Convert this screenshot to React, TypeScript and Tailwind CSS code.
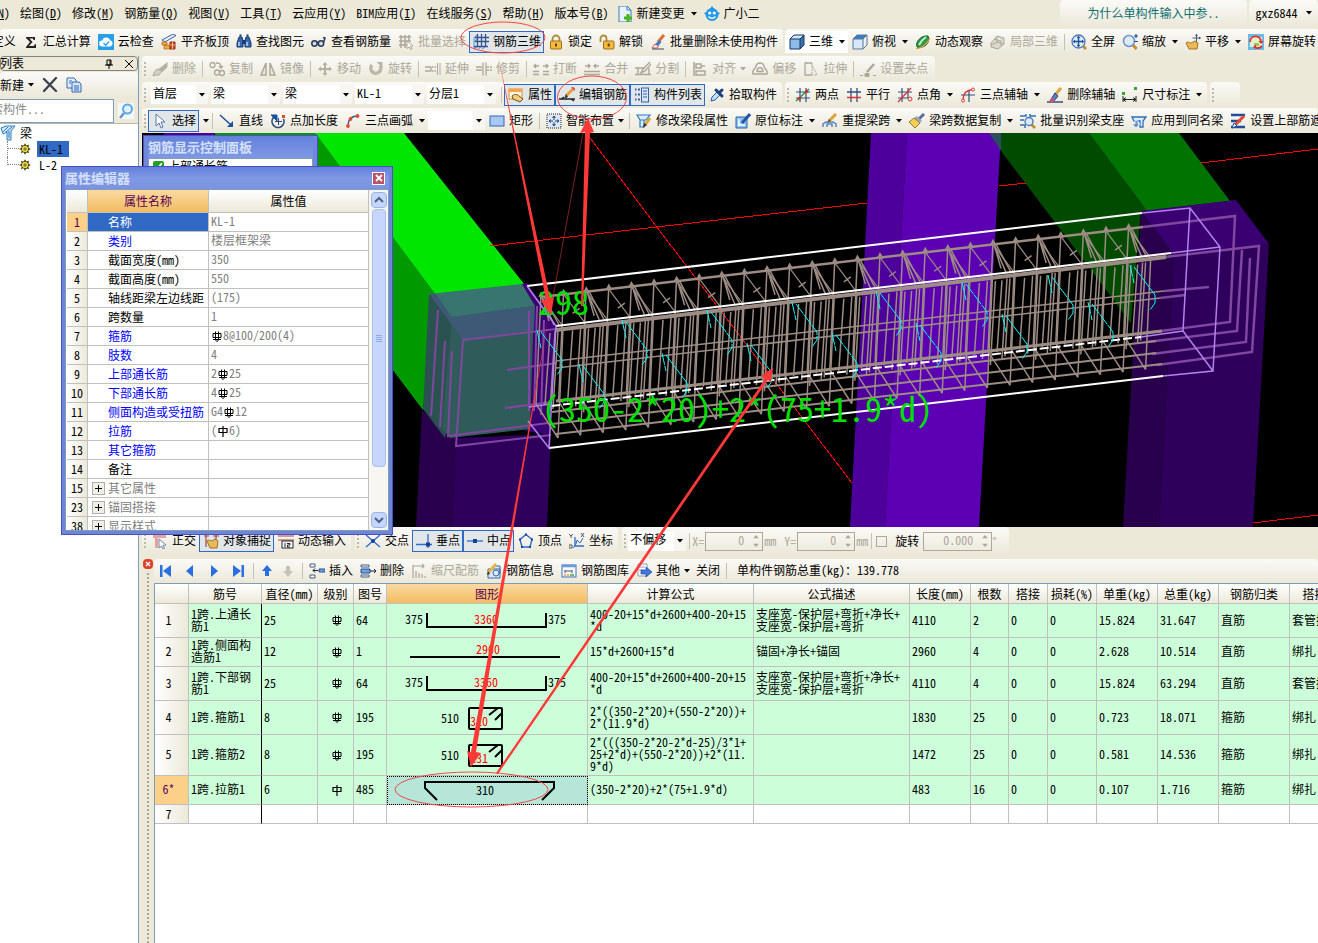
import React from "react";

const BLUE = "#1d4f9e";
const GHOST = "#aca899";

/* ---------- icons, all drawn on a 16 x 16 grid ---------- */

const magnifier = (
  <>
    <path d="M10.5 10.5 14.5 15" stroke="#c98b2e" strokeWidth="3" />
    <circle cx="7" cy="7" r="5.5" fill="#dcecfb" stroke="#6f93c4" strokeWidth="1.5" />
  </>
);

const art = {
  cloud: (
    <>
      <rect width="16" height="16" fill="#28a0e8" />
      <path d="M4 12.5a3 3 0 0 1 .3-6A4 4 0 0 1 12 6.300a3.200 3.200 0 0 1 .4 6.200z" fill="#fff" />
      <path d="m5.500 9 2.200 2.200L11 7.500" stroke="#28a0e8" strokeWidth="1.300" fill="none" />
    </>
  ),
  sigma: <path d="M3 3h9v3h-1.500l-.5-1.500H6.500L9.500 8l-3.500 4h5l.7-1.700H13V14H3v-1l4-5-4-4z" fill="#222" />,
  slab: (
    <>
      <path d="M1 6 12 0l3 1.500L4 8z" fill="#e8eef8" stroke="#3b62a8" />
      <path d="M1 8h5v3H1zM3 11h6v4H3z" fill="#f3a93c" stroke="#b5651a" strokeWidth=".7" />
      <path d="M9 8h5v7H9z" fill="#c8472b" stroke="#8e2a16" />
      <path d="M11.500 8v7M9 11h5" stroke="#f3c08c" />
    </>
  ),
  binoculars: (
    <>
      <path d="M3 3h3l1 4v6H1V9zM10 3h3l2 6v4H9V7z" fill="#3a69b4" stroke="#16386f" />
      <path d="M6.500 6h3v4h-3z" fill="#16386f" />
      <path d="M3 8v4M11 8v4" stroke="#bcd4f2" strokeWidth="1.500" />
      <path d="M3.500 1.500h2M10.500 1.500h2" stroke="#16386f" strokeWidth="2" />
    </>
  ),
  glasses: (
    <g fill="#c8dcf0" stroke="#2b3950" strokeWidth="1.500">
      <circle cx="3.500" cy="9.500" r="2.700" />
      <circle cx="10" cy="9.500" r="2.700" />
      <path d="M6 9h1.500M12.500 8.500 14 4l-2-.5" fill="none" />
    </g>
  ),
  ghostGrid: (
    <>
      <path d="M1 3h12M1 7h12M1 11h8M3 1v13M7 1v13M11 1v6" stroke={GHOST} strokeWidth="1.500" />
      <path d="m9 7 6 5-2.500.3L14 15l-1.500.6-1.200-2.600L9 14.500z" fill="#fff" stroke={GHOST} />
    </>
  ),
  grid3d: (
    <>
      <path d="M1 15V4l3-3M1 15l4-3M5 15l4-3M9 15l4-3M1 8l3-3" fill="none" stroke="#7fa0d8" strokeWidth="1.300" />
      <path d="M4.500 0v13M8.500 0v13M12.500 0v13M2 3.500h14M2 7.500h14M1 12.500h14" stroke="#33558f" strokeWidth="1.300" />
    </>
  ),
  lock: (
    <>
      <path d="M4.500 8V5a3.500 3.500 0 0 1 7 0v3" fill="none" stroke="#b18a38" strokeWidth="1.800" />
      <rect x="2.500" y="7" width="11" height="8" rx="1" fill="#f4b93f" stroke="#a36f14" />
      <path d="M8 9.500v3" stroke="#69430a" strokeWidth="2" />
    </>
  ),
  unlock: (
    <>
      <path d="M1.500 8V4.500a3 3 0 0 1 6 0V7" fill="none" stroke="#b18a38" strokeWidth="1.800" />
      <rect x="4.500" y="7" width="10.500" height="8" rx="1" fill="#f4b93f" stroke="#a36f14" />
      <path d="M9.700 9.500v3" stroke="#69430a" strokeWidth="2" />
    </>
  ),
  brush: (
    <>
      <path d="M14 1 8 8" stroke="#dd7030" strokeWidth="3" />
      <path d="m9.500 6 2 2-4 5-3.500-2z" fill="#3d7bd0" />
      <path d="M5 10 2 14h5l1.500-2z" fill="#fff" stroke="#d05050" />
      <path d="M2 15h12" stroke="#33466b" />
    </>
  ),
  cube: (
    <>
      <path d="M1 5h10v10H1z" fill="#8ebbe8" />
      <path d="m1 5 4-4h10l-4 4z" fill="#cfe4f8" />
      <path d="m11 5 4-4v10l-4 4z" fill="#3c6fae" />
      <path d="M1 5h10v10H1zM1 5l4-4h10l-4 4M15 1v10l-4 4" fill="none" stroke="#17365f" />
    </>
  ),
  cubeTop: (
    <>
      <path d="M1 5h10v10H1z" fill="#d8e8f6" />
      <path d="m1 5 4-4h10l-4 4z" fill="#3c7cc4" />
      <path d="M1 5h10v10H1zM1 5l4-4h10l-4 4M15 1v10l-4 4" fill="none" stroke="#54769f" />
    </>
  ),
  orbit: (
    <>
      <ellipse cx="8" cy="8" rx="8" ry="3" transform="rotate(-45 8 8)" fill="#f08a24" />
      <path d="M2 13C0 8 6 1 13 2c3 7-4 13-11 11z" fill="#2a9a4a" stroke="#175f2d" />
      <path d="M4 11c2-4 4-6 7-8" stroke="#bff0c8" strokeWidth="2" fill="none" />
      <path d="M1 14.500C5 15 12 11 15 4" stroke="#e8a33a" strokeWidth="1.200" fill="none" />
    </>
  ),
  localCube: (
    <path d="m1 9 6-7 7 2v6l-6 5-7-2zM7 2v6l7 2M7 8l-6 3M4 5l7 2v5" fill="#dcd9cb" stroke={GHOST} />
  ),
  fullscreen: (
    <>
      <path d="m11 11 4 4" stroke="#c98b2e" strokeWidth="3" />
      <circle cx="7.500" cy="7.500" r="6.500" fill="#e3effc" stroke="#4c74b4" strokeWidth="1.300" />
      <path d="M7.500 2.500v10M2.500 7.500h10" stroke={BLUE} strokeWidth="1.500" />
      <path d="m7.500 2-2 2h4zM7.500 13l-2-2h4zM2 7.500l2-2v4zM13 7.500l-2-2v4z" fill={BLUE} />
    </>
  ),
  zoom: (
    <>
      {magnifier}
      <path d="M12 2h4M14 0v4M12 7.500h4" stroke={BLUE} strokeWidth="1.200" />
    </>
  ),
  pan: (
    <>
      <path d="M1 9c2-2 4 0 5 0l4-2 3 2-1 6H4z" fill="#eab958" stroke="#a87520" />
      <path d="M11.500 0v8M7.500 4h8" stroke="#44597e" />
      <path d="m11.500 0-1.500 2h3zM16 4l-2-1.500v3z" fill="#44597e" />
    </>
  ),
  screenRotate: (
    <>
      <rect width="16" height="16" fill="#6cbbe6" />
      <rect x="2" y="3" width="12" height="10" fill="#e4f0c8" />
      <path d="M6 9h5v3H6z" fill="#9cc860" />
      <path d="M2 8c0-7 11-8 11 0" fill="none" stroke="#e02e2e" strokeWidth="1.800" />
      <path d="M14 12c-2 2-5 3-7 1" fill="none" stroke="#e02e2e" strokeWidth="1.800" />
      <path d="m10.500 7 5 0-2.500 3zM8 10.500v4.500l-3-2z" fill="#e02e2e" />
    </>
  ),
  ghostBrush: (
    <>
      <path d="M1 15c1-4 2-6 5-7l4 2-3 4H4z" fill="#d5d1c2" stroke={GHOST} />
      <path d="M15.500 1v5l-5 5-4-3z" fill="#b5b1a1" />
    </>
  ),
  ghostCopy: (
    <g fill="none" stroke={GHOST} strokeWidth="1.300">
      <circle cx="3.500" cy="4" r="2.500" />
      <circle cx="8" cy="11.500" r="2.500" />
      <circle cx="13" cy="12" r="2.500" />
      <path d="M7 2c4 0 5 1 5 5m-2-2 2 2 2-2" />
    </g>
  ),
  ghostMirror: <path d="M6 2v12H1zM10 2v12h5z" fill="#ece9d8" stroke={GHOST} strokeWidth="1.500" />,
  ghostMove: (
    <path d="m8 1 2.500 3H9v3h3V5.500L15 8l-3 2.500V9H9v3h1.500L8 15l-2.500-3H7V9H4v1.500L1 8l3-2.500V7h3V4H5.500z" fill="#b5b1a1" />
  ),
  ghostRotate: (
    <>
      <path d="M4 4a5 5 0 1 0 8 .5" fill="none" stroke="#bcb8a8" strokeWidth="3.500" />
      <path d="M8.500 1h6v6z" fill="#bcb8a8" />
    </>
  ),
  ghostExtend: (
    <>
      <path d="M0 6h6M0 10h6M6 5.500v5" stroke={GHOST} strokeWidth="1.300" />
      <path d="M7 6h5M7 10h5" stroke={GHOST} strokeDasharray="1.500 1" strokeWidth="1.300" />
      <path d="M12.500 2v12M15 2v12" stroke={GHOST} />
    </>
  ),
  ghostTrim: (
    <>
      <path d="M0 6h6M0 9h6" stroke={GHOST} strokeWidth="1.300" />
      <path d="M7 1.500v13M10 1.500v13" stroke={GHOST} strokeWidth="1.300" />
      <path d="M11 6h5M11 9h5" stroke={GHOST} strokeWidth="1.300" strokeDasharray="2 1" />
    </>
  ),
  ghostBreak: (
    <path d="M0 10.500h6M10 10.500h6M0 13.500h6M10 13.500h6M1 5h5M10 5h5M3 3 1 5l2 2M13 3l2 2-2 2" fill="none" stroke={GHOST} strokeWidth="1.400" />
  ),
  ghostMerge: (
    <path d="M0 10.500h16M0 13.500h16M1 5h5M10 5h5M4 3l2 2-2 2M12 3l-2 2 2 2" fill="none" stroke={GHOST} strokeWidth="1.400" />
  ),
  ghostSplit: <path d="M0 7h10M0 13.500h16M3 7v7M14 7v7M15 1 8 8l-2 4 4-2 6-7" fill="none" stroke={GHOST} strokeWidth="1.400" />,
  ghostAlign: <path d="M2 1v14M4 3h5v4H4zM4 10h9v4H4zM9 5h4" fill="none" stroke={GHOST} strokeWidth="1.500" />,
  ghostOffset: (
    <g fill="none" stroke={GHOST} strokeWidth="1.400">
      <path d="M1 13c-1.500-5 2-4 3-8s7-4 8 0 4 3 3 8z" />
      <path d="M5 10.500c0-5 6-5 6 0z" />
    </g>
  ),
  ghostStretch: (
    <>
      <path d="M9 2H2v12h7" fill="none" stroke={GHOST} strokeWidth="1.300" />
      <path d="M9 2v12M9 4l5 10H9" fill="none" stroke={GHOST} strokeDasharray="2 1" />
    </>
  ),
  ghostGrip: (
    <>
      <path d="M0 14.500h3M13 14.500h3M5 12.500h4v3H5z" fill={GHOST} stroke={GHOST} />
      <path d="M14 3 7 11" stroke={GHOST} strokeWidth="2.500" />
    </>
  ),
  property: (
    <>
      <rect x="1" y="2" width="13" height="10" fill="#fff4dc" stroke="#e0892c" />
      <path d="M1 2h13v3H1z" fill="#f6a445" />
      <path d="M4 9c2-2 5-2 7 0l4 3-3 3-7-3z" fill="#f2cd7c" stroke="#6b5320" />
    </>
  ),
  editBar: (
    <>
      <path d="M0 12h16M2 12l3-2M12 12l3 2" stroke="#222" strokeWidth="1.300" />
      <path d="m14 2-7 7" stroke="#e3a23b" strokeWidth="3" />
      <path d="m7 7-2 5 4-2z" fill="#333" />
      <path d="m13 0 3 3" stroke="#d85252" strokeWidth="2" />
    </>
  ),
  list: (
    <>
      <path d="M1 2.500h1.500M4 2.500h2M1 7.500h1.500M4 7.500h2M1 12.500h1.500M4 12.500h2" stroke="#3a5fa0" strokeWidth="2" />
      <rect x="7.500" y="1" width="7" height="14" fill="#d7e6fa" stroke="#3a5fa0" />
      <path d="M9 4h4M9 7h4M9 10h4" stroke="#3a5fa0" />
    </>
  ),
  dropper: (
    <>
      <path d="m2 14 1-4 5-5 3 3-5 5z" fill="#bfe0f8" stroke="#2d5fae" />
      <path d="m7 3 6 6M10 6l3-3" stroke="#1d3f80" strokeWidth="3" strokeLinecap="round" />
    </>
  ),
  twoPoint: (
    <>
      <path d="M1 5h14M1 11h14M5 1v14M11 1v14" stroke="#33507f" strokeWidth="1.200" />
      <path d="M1 14 14 2" stroke="#1c8a2c" strokeWidth="1.300" />
      <circle cx="4.500" cy="11.500" r="1.700" fill="#c83232" />
      <circle cx="11.500" cy="4.500" r="1.700" fill="#c83232" />
    </>
  ),
  parallel: (
    <>
      <path d="M1 5h14M5 1v14M11 1v14" stroke="#33507f" strokeWidth="1.300" />
      <path d="M1 10.500h14" stroke="#d33" strokeWidth="1.500" />
    </>
  ),
  pointAngle: (
    <>
      <path d="M1 5h14M1 11h10M5 1v14M11 1v10" stroke="#33507f" strokeWidth="1.200" />
      <path d="M1 15 14 1" stroke="#d33" strokeWidth="1.300" />
      <circle cx="13" cy="12" r="2" fill="none" stroke="#d33" />
    </>
  ),
  threeAxis: (
    <>
      <path d="M1 8h14M9 3v12" stroke="#33507f" strokeWidth="1.200" />
      <path d="M3 13C3 6 6 3 13 2.500" fill="none" stroke="#d33" strokeWidth="1.300" />
      <circle cx="3" cy="13.500" r="1.500" fill="#fff" stroke="#d33" />
      <circle cx="13" cy="2.500" r="1.500" fill="#fff" stroke="#d33" />
    </>
  ),
  eraseAxis: (
    <>
      <path d="M0 15h16" stroke="#33507f" strokeWidth="1.500" />
      <path d="m14 1-6 7" stroke="#d8a743" strokeWidth="3" />
      <path d="m8 6 3 3-4 5H3z" fill="#5b7fc0" stroke="#263f78" />
      <path d="m4 11 4 2-2 2H3z" fill="#e0506a" />
    </>
  ),
  dimension: (
    <>
      <path d="M0 5h3v3H0zM12 0h3v3h-3z" fill="#35a535" />
      <path d="M1 9v6M14 9v6M1 12.500h13M4 10.500l-3 2 3 2M11 10.500l3 2-3 2" fill="none" stroke="#222" />
    </>
  ),
  cursor: <path d="M4 1v12l3-3 2 5 2-1-2-5h4z" fill="#fff" stroke="#5677ab" />,
  line: (
    <>
      <path d="m1 2 11 10" stroke={BLUE} strokeWidth="1.500" />
      <path d="M14 14H8l6-6z" fill={BLUE} />
    </>
  ),
  pointLength: (
    <>
      <path d="M4 4a6 6 0 1 0 9.500 2" fill="none" stroke="#334d7a" strokeWidth="1.700" />
      <path d="M1 2h6v6zM8.500 5v7M5 8.500h7" stroke={BLUE} fill={BLUE} />
      <path d="M12 2h3v3h-3z" fill="#d94a3a" />
    </>
  ),
  arc: (
    <>
      <path d="M3 13C3 7 6 3 12 3" fill="none" stroke="#2e5f9f" strokeWidth="1.400" />
      <circle cx="3" cy="13" r="1.900" fill="#e04a35" />
      <circle cx="5.500" cy="6" r="1.900" fill="#e04a35" />
      <circle cx="12.500" cy="3" r="1.900" fill="#e04a35" />
    </>
  ),
  rectangle: <rect x="1" y="3" width="14" height="10" fill="#a9c8f6" stroke="#3566b8" />,
  smart: (
    <>
      <rect x="1" y="1" width="14" height="14" fill="#dce8f8" stroke="#222" strokeDasharray="1 1" />
      <path d="M8 3v4M8 9v4M3 8h4M9 8h4M6.500 5 8 3l1.500 2M6.500 11 8 13l1.500-2M5 6.500 3 8l2 1.500M11 6.500 13 8l-2 1.500" fill="none" stroke="#24416f" />
    </>
  ),
  editSpan: (
    <>
      <path d="M1 2h13l-4 5H4zM4 7h4v7H4z" fill="#d9ecfb" stroke="#2e7abf" strokeWidth="1.200" />
      <path d="m14 5-5 7" stroke="#dfa13a" strokeWidth="3" />
      <path d="m8 10-1 5 4-3z" fill="#333" />
    </>
  ),
  inPlace: (
    <>
      <path d="M1 4h11v11H1z" fill="#8ec0ee" stroke="#2a66ac" />
      <path d="M3 12h7M4 6v7" stroke="#fff" strokeWidth="1.500" />
      <path d="m15 1-8 9" stroke="#2855a0" strokeWidth="3" />
    </>
  ),
  reSpan: (
    <>
      <path d="M1 14v-3l3-2h7l3 2v3M5 14v-3h5v3" fill="none" stroke="#5b84bd" strokeWidth="1.500" />
      <path d="m14 1-7 7" stroke="#e5a23c" strokeWidth="3" />
      <path d="m7 6-2 4 4-2z" fill="#555" />
    </>
  ),
  spanCopy: (
    <>
      <path d="m15 1-5 5" stroke="#5a6d94" strokeWidth="3" />
      <path d="m8 3 5 5-2 2-6-5z" fill="#9aa7c4" />
      <path d="m5 5 6 5-5 5-6-6z" fill="#f3cf5a" stroke="#9b7a22" />
    </>
  ),
  identify: (
    <>
      <path d="M0 3h6V1M0 7h4M10 1v2h6M0 12h5v3" fill="none" stroke="#2e6fba" strokeWidth="1.500" />
      <path d="m11 11 4 4" stroke="#c98b2e" strokeWidth="2.500" />
      <circle cx="9" cy="8.500" r="4" fill="#d8eafb" stroke="#4773b2" strokeWidth="1.300" />
    </>
  ),
  sameName: (
    <>
      <path d="M1 4h14l-3 4v6H9V8H3z" fill="#dceffc" stroke="#2e6fba" strokeWidth="1.300" />
      <path d="M4 7v4H1l4 4 4-4H7V8z" fill="#6e8fc8" stroke="#fff" strokeWidth=".7" />
    </>
  ),
  topBar: (
    <>
      <path d="M1 2h14M1 8h10M1 14h14" stroke="#1d4f9e" strokeWidth="2.500" />
      <path d="M14 3 4 13" stroke="#e04a30" strokeWidth="3" />
      <path d="m4 10-2 5 5-2z" fill="#fff" stroke="#1d4f9e" />
    </>
  ),
  ortho: (
    <>
      <path d="M1 2h13v3H6v10H3V5H1z" fill="#e5a3a0" />
      <path d="m7 6 7 6-3 .3 1.500 3-1.500.7-1.500-3L7 15z" fill="#fff" stroke="#6b86ac" />
    </>
  ),
  snap: (
    <>
      <path d="M1 3h5M3 1v13M13 1v6M10 3h6" stroke="#a9443c" strokeWidth="1.200" />
      <path d="M4 8c2-2 4 0 5 0l3-2 3 2-1 7H7z" fill="#eab958" stroke="#9a7226" />
    </>
  ),
  dynInput: (
    <>
      <path d="M0 3h16M0 7h16" stroke="#a9443c" />
      <rect x="4" y="8" width="11" height="7" fill="#fff" stroke="#222" />
      <path d="M7 10v4M9 10.500h3v1.500H9.500V14H12" fill="none" stroke="#222" />
    </>
  ),
  cross: (
    <>
      <path d="m1 2 14 12M15 2 1 14" stroke="#2e6bd0" strokeWidth="1.300" />
      <circle cx="8" cy="8" r="2" fill="#163f92" />
    </>
  ),
  perpendicular: (
    <>
      <path d="M12 1v14M0 11.500h16" stroke="#2e6bd0" strokeWidth="1.300" />
      <path d="M10 9.500h4v4h-4z" fill="#163f92" />
    </>
  ),
  middle: (
    <>
      <path d="M0 8h16" stroke="#2e6bd0" strokeWidth="1.300" />
      <path d="M6 6h4v4H6z" fill="#163f92" />
    </>
  ),
  vertex: (
    <>
      <path d="m8 1.500 6 5L12 14H4L2 6.500z" fill="none" stroke="#2e6bd0" strokeWidth="1.400" />
      <path d="M7 .5h2v2H7zM13 5.500h2v2h-2zM1 5.500h2v2H1zM3 13h2v2H3zM11 13h2v2h-2z" fill="#163f92" />
    </>
  ),
  coords: (
    <>
      <path d="M6 4v9h9" fill="none" stroke="#2e6bd0" strokeWidth="1.300" />
      <path d="m4 15 3-4 1-4 3 3 3-5" fill="none" stroke="#2e6bd0" />
      <path d="m0 1 2 2 2-2M2 3v2M12 0l3 4M15 0l-3 4M0 12h3v3H0z" fill="none" stroke="#555" />
    </>
  ),
  insert: (
    <>
      <path d="M1 1h5v3H1zM1 12h5v3H1z" fill="#fff" stroke="#44597e" />
      <path d="M10 6h6v3h-6z" fill="#6da3ea" stroke="#23508f" />
      <path d="M4 7.500h5M6 5.500l-2 2 2 2" fill="none" stroke="#222" />
    </>
  ),
  remove: (
    <>
      <path d="M1 2h8v2H1zM1 12h8v2H1z" fill="#fff" stroke="#44597e" />
      <path d="M1 6h9v4H1z" fill="#6da3ea" stroke="#23508f" />
      <path d="M10 8h6M14 6l2 2-2 2" fill="none" stroke="#222" />
    </>
  ),
  ghostScale: (
    <path d="M2 2v13M2 3h11M11 1l2 2-2 2M5 8v7M8 10v5M11 11v4M14 13v2" fill="none" stroke={GHOST} strokeWidth="1.200" />
  ),
  info: (
    <>
      <path d="M2 6h12v9H2zM8 3h6v8" fill="#dbe9fb" stroke="#3566a8" />
      <circle cx="10" cy="10" r="3" fill="none" stroke="#3566a8" />
      <path d="m10 1-8 9" stroke="#e8b54a" strokeWidth="3" />
      <path d="m2 8-1 4 3-1z" fill="#333" />
    </>
  ),
  library: (
    <>
      <rect x="1" y="2" width="14" height="12" fill="#f4f8fe" stroke="#3e70b8" />
      <path d="M1 3h14" stroke="#6b9ae0" strokeWidth="2.500" />
      <path d="M4 7v3M4 8h7M11 7v3" fill="none" stroke="#555" />
      <path d="M3 12h2M6 12h2" stroke="#e8963a" strokeWidth="1.500" />
      <path d="M9 12h4" stroke="#46a04a" strokeWidth="1.500" />
    </>
  ),
  other: (
    <>
      <path d="M2 1h9v12H2z" fill="#fff" stroke="#8a9cbc" />
      <path d="M3 4h6M3 7h4" stroke="#8a9cbc" />
      <path d="M5 7h5V4l6 5-6 5v-3H5z" fill="#3f78dc" stroke="#1d479a" strokeWidth=".7" />
    </>
  ),
  newDoc: (
    <>
      <path d="M2 0h8l4 4v12H2z" fill="#eaf4fd" stroke="#3c7bb8" />
      <path d="M10 0v4h4" fill="none" stroke="#3c7bb8" />
      <path d="M11 8v8M7 12h8" stroke="#46b31c" strokeWidth="3" />
    </>
  ),
  smiley: (
    <>
      <path d="M8 0 6 3h4zM0 7l3-1v4zM16 7l-3-1v4z" fill="#1d8be0" />
      <circle cx="8" cy="8.500" r="6.500" fill="#2698ea" />
      <circle cx="5.700" cy="7" r="1.600" fill="#fff" />
      <circle cx="10.300" cy="7" r="1.600" fill="#fff" />
      <path d="M4.500 10.500q3.500 3.500 7 0" fill="none" stroke="#fff" strokeWidth="1.300" />
    </>
  ),
  gear: (
    <>
      <circle cx="8" cy="8" r="4.500" fill="#f4e24a" stroke="#4c4708" strokeWidth="1.500" />
      <path d="M8 1v14M1 8h14M3 3l10 10M13 3 3 13" stroke="#4c4708" strokeWidth="2" strokeDasharray="3.500 7 3.500" />
      <circle cx="8" cy="8" r="4" fill="#f4e24a" />
      <circle cx="8" cy="8" r="1.500" fill="#fff" stroke="#4c4708" strokeWidth="1.300" />
    </>
  ),
  beam: (
    <>
      <path d="M1 3 6 1h9l-4 5v9H7V7L3 9z" fill="#cfe6f8" stroke="#2b7dc0" />
      <path d="M3 7 8 2M6 7l6-5M9 13V6" stroke="#2b7dc0" />
    </>
  ),
  copy: (
    <>
      <path d="M1 1h7l2 2v8H1z" fill="#e6f0fc" stroke="#3469b4" />
      <path d="M6 5h7l2 2v8H6z" fill="#d3e4fa" stroke="#3469b4" />
      <path d="M8 9h5M8 11h5M8 13h5M3 4h3M3 6h2" stroke="#3469b4" />
    </>
  ),
  close: <path d="M2 2 14 14M14 1 2 14" stroke="#39424e" strokeWidth="2.300" strokeLinecap="round" />,
  search: (
    <>
      <path d="m6 10-4 5" stroke="#6f93c4" strokeWidth="2.500" />
      <circle cx="9.500" cy="6" r="4.500" fill="#dff1fe" stroke="#5aaae4" strokeWidth="2" />
    </>
  ),
};

type IconName = keyof typeof art;

function Icon({ name }: { name: IconName }) {
  return (
    <svg viewBox="0 0 16 16" className="size-4 shrink-0" fill="none" aria-hidden="true">
      {art[name]}
    </svg>
  );
}

function Arrow({ ghost }: { ghost?: boolean }) {
  return (
    <svg viewBox="0 0 6 4" className="h-1 w-1.5 shrink-0" aria-hidden="true">
      <path d="M0 0h6L3 3.500z" fill={ghost ? GHOST : "#000"} />
    </svg>
  );
}

/* ---------- toolbar parts ---------- */

type ToolProps = {
  icon?: IconName;
  label: string;
  pressed?: boolean;
  disabled?: boolean;
  menu?: "wide" | "tight";
};

function Tool({ icon, label, pressed, disabled, menu }: ToolProps) {
  return (
    <button
      type="button"
      disabled={disabled}
      aria-pressed={pressed}
      className={`flex h-[22px] shrink-0 items-center gap-1 border pr-0.5 pl-[3px] ${
        pressed ? "border-[#316ac5] bg-[#e1e6e8]" : "border-transparent"
      } ${disabled ? "text-[#aca899]" : "text-black"}`}
    >
      {icon && <Icon name={icon} />}
      <span className="pb-0.5">{label}</span>
      {menu && (
        <span className={menu === "wide" ? "flex w-2 justify-end" : "flex w-[5px]"}>
          <Arrow ghost={disabled} />
        </span>
      )}
    </button>
  );
}

function Sep() {
  return (
    <span className="flex w-1.5 shrink-0 justify-center">
      <span className="h-4 w-px bg-[#c5c2b2]" />
    </span>
  );
}

function Grip() {
  return (
    <span className="flex w-1.5 shrink-0 flex-col items-center gap-0.5">
      {[0, 1, 2, 3].map((i) => (
        <span key={i} className="size-0.5 bg-[#bdbaab]" />
      ))}
    </span>
  );
}

function Bar({ children, className = "" }: { children?: React.ReactNode; className?: string }) {
  return (
    <div
      className={`flex shrink-0 items-center rounded-sm bg-gradient-to-b from-[#fbfaf7] to-[#ebe8d9] ${className}`}
    >
      {children}
    </div>
  );
}

function Combo({ label, value, className }: { label: string; value: string; className: string }) {
  return (
    <span className={`relative flex h-[19px] shrink-0 items-center bg-white ${className}`}>
      <select aria-label={label} className="h-full w-full appearance-none bg-transparent pb-1 pl-0.5 outline-none">
        <option>{value}</option>
      </select>
      <span className="pointer-events-none absolute inset-y-0 right-0 flex w-3 items-center justify-center bg-[#f7f6f0]">
        <Arrow />
      </span>
    </span>
  );
}

function Spin({ label, value, className }: { label: string; value: string; className: string }) {
  return (
    <span className={`flex h-[19px] shrink-0 items-center border border-[#aca899] ${className}`}>
      <input
        aria-label={label}
        defaultValue={value}
        disabled
        className="h-full w-full min-w-0 bg-transparent pr-1.5 pb-1 text-right text-[#aca899]"
      />
      <svg viewBox="0 0 12 17" className="h-4 w-3 shrink-0" aria-hidden="true">
        <path d="M3 5.500h6L6 2zM3 11.500h6L6 15z" fill={GHOST} />
      </svg>
    </span>
  );
}

/* ---------- top ---------- */

const menus = ["构件(N)", "绘图(D)", "修改(M)", "钢筋量(Q)", "视图(V)", "工具(T)", "云应用(Y)", "BIM应用(I)", "在线服务(S)", "帮助(H)", "版本号(B)"];

function MenuText({ text }: { text: string }) {
  const at = text.indexOf("(") + 1;
  return (
    <>
      {text.slice(0, at)}
      <u className="underline-offset-1">{text[at]}</u>
      {text.slice(at + 1)}
    </>
  );
}

function MenuBar() {
  return (
    <nav className="flex h-[27px] items-center">
      <div className="-ml-8 flex items-center gap-2.5 pb-0.5">
        {menus.map((m) => (
          <button type="button" key={m}>
            <MenuText text={m} />
          </button>
        ))}
      </div>
      <div className="ml-1 flex items-center">
        <Tool icon="newDoc" label="新建变更" menu="wide" />
        <Tool icon="smiley" label="广小二" />
      </div>
      <div className="ml-auto flex gap-0.5">
        <Bar className="h-[27px] w-[187px] justify-center pb-0.5">
          <a href="#help" className="text-[#0e6f70]">为什么单构件输入中参..</a>
        </Bar>
        <Bar className="h-[27px] w-[69px] justify-center pb-0.5">
          <button type="button" className="flex items-center gap-2">
            gxz6844 <Arrow />
          </button>
        </Bar>
      </div>
    </nav>
  );
}

function MainBar() {
  return (
    <div className="flex h-[29px] items-center gap-0.5">
      <Bar className="h-[26px] w-[783px] justify-end pr-0.5">
        <Tool label="定义" />
        <Tool icon="sigma" label="汇总计算" />
        <Tool icon="cloud" label="云检查" />
        <Tool icon="slab" label="平齐板顶" />
        <Tool icon="binoculars" label="查找图元" />
        <Tool icon="glasses" label="查看钢筋量" />
        <Tool icon="ghostGrid" label="批量选择" disabled />
        <Tool icon="grid3d" label="钢筋三维" pressed />
        <Tool icon="lock" label="锁定" />
        <Tool icon="unlock" label="解锁" />
        <Tool icon="brush" label="批量删除未使用构件" />
      </Bar>
      <Bar className="h-[26px] flex-1">
        <span className="flex bg-white">
          <Tool icon="cube" label="三维" menu="wide" />
        </span>
        <Tool icon="cubeTop" label="俯视" menu="wide" />
        <Tool icon="orbit" label="动态观察" />
        <Tool icon="localCube" label="局部三维" disabled />
        <Sep />
        <Tool icon="fullscreen" label="全屏" />
        <Tool icon="zoom" label="缩放" menu="wide" />
        <Tool icon="pan" label="平移" menu="wide" />
        <Tool icon="screenRotate" label="屏幕旋转" />
      </Bar>
    </div>
  );
}

function EditBars() {
  return (
    <div className="flex flex-col gap-px">
      <div className="flex">
        <Bar className="h-[25px] pr-1">
          <Grip />
          <Tool icon="ghostBrush" label="删除" disabled />
          <Sep />
          <Tool icon="ghostCopy" label="复制" disabled />
          <Tool icon="ghostMirror" label="镜像" disabled />
          <Sep />
          <Tool icon="ghostMove" label="移动" disabled />
          <Tool icon="ghostRotate" label="旋转" disabled />
          <Sep />
          <Tool icon="ghostExtend" label="延伸" disabled />
          <Tool icon="ghostTrim" label="修剪" disabled />
          <Sep />
          <Tool icon="ghostBreak" label="打断" disabled />
          <Tool icon="ghostMerge" label="合并" disabled />
          <Tool icon="ghostSplit" label="分割" disabled />
          <Sep />
          <Tool icon="ghostAlign" label="对齐" disabled menu="tight" />
          <Tool icon="ghostOffset" label="偏移" disabled />
          <Tool icon="ghostStretch" label="拉伸" disabled />
          <Sep />
          <Tool icon="ghostGrip" label="设置夹点" disabled />
        </Bar>
      </div>
      <div className="flex gap-[3px]">
        <Bar className="h-[25px] pr-0.5">
          <Grip />
          <span className="flex items-center gap-[3px] pr-0.5 pl-[3px]">
            <Combo label="楼层" value="首层" className="w-[57px]" />
            <Combo label="构件类别" value="梁" className="w-[69px]" />
            <Combo label="构件类型" value="梁" className="w-[69px]" />
            <Combo label="构件" value="KL-1" className="w-[69px]" />
            <Combo label="分层" value="分层1" className="w-[69px]" />
          </span>
          <Sep />
          <Tool icon="property" label="属性" pressed />
          <Tool icon="editBar" label="编辑钢筋" pressed />
          <Tool icon="list" label="构件列表" pressed />
          <Tool icon="dropper" label="拾取构件" />
        </Bar>
        <Bar className="h-[25px] pr-0.5">
          <Grip />
          <Tool icon="twoPoint" label="两点" />
          <Tool icon="parallel" label="平行" />
          <Tool icon="pointAngle" label="点角" menu="wide" />
          <Tool icon="threeAxis" label="三点辅轴" menu="wide" />
          <Tool icon="eraseAxis" label="删除辅轴" />
          <Tool icon="dimension" label="尺寸标注" menu="wide" />
        </Bar>
        <Bar className="h-[25px] w-[30px]">
          <Grip />
        </Bar>
      </div>
      <Bar className="h-[25px] overflow-hidden">
        <Grip />
        <Tool icon="cursor" label="选择" pressed />
        <span className="flex w-5 pl-1">
          <Arrow />
        </span>
        <Sep />
        <Tool icon="line" label="直线" />
        <Tool icon="pointLength" label="点加长度" />
        <Tool icon="arc" label="三点画弧" menu="wide" />
        <Combo label="绘制方式" value="" className="w-[57px]" />
        <Tool icon="rectangle" label="矩形" />
        <Sep />
        <Tool icon="smart" label="智能布置" menu="tight" />
        <Sep />
        <Tool icon="editSpan" label="修改梁段属性" />
        <Tool icon="inPlace" label="原位标注" menu="wide" />
        <Tool icon="reSpan" label="重提梁跨" menu="wide" />
        <Tool icon="spanCopy" label="梁跨数据复制" menu="wide" />
        <Tool icon="identify" label="批量识别梁支座" />
        <Tool icon="sameName" label="应用到同名梁" />
        <Tool icon="topBar" label="设置上部筋遮挡" />
      </Bar>
    </div>
  );
}

/* ---------- component list on the left ---------- */

function ComponentList() {
  return (
    <aside className="flex w-[139px] shrink-0 flex-col border-r border-[#7f9db9]">
      <header className="flex h-[15px] items-center gap-3 rounded-sm border border-[#85837a] pr-1">
        <span className="-ml-px flex-1 pb-0.5">列表</span>
        <svg viewBox="0 0 8 10" className="h-2.5 w-2" aria-hidden="true">
          <path d="M2 1h4v5H2zM0 6h8M4 6v4M5 1v5" fill="none" stroke="#000" />
        </svg>
        <button type="button" aria-label="关闭列表">
          <svg viewBox="0 0 8 8" className="size-2">
            <path d="m0 0 8 8M8 0 0 8" stroke="#000" />
          </svg>
        </button>
      </header>
      <Bar className="mt-px h-[26px] gap-2">
        <button type="button" className="flex items-center gap-1">
          新建 <Arrow />
        </button>
        <button type="button" aria-label="删除构件">
          <Icon name="close" />
        </button>
        <button type="button" aria-label="复制构件">
          <Icon name="copy" />
        </button>
      </Bar>
      <div className="flex h-[26px] items-center justify-between overflow-hidden border-b border-[#b9b6a6] bg-[#ece9d8]">
        <input
          aria-label="搜索构件"
          placeholder="搜索构件..."
          className="-ml-6 h-6 w-[138px] border border-[#7f9db9] bg-white px-0.5 pb-1 placeholder:text-[#8a8a8a]"
        />
        <button type="button" aria-label="搜索" className="mx-auto bg-[#f4f8fc]">
          <Icon name="search" />
        </button>
      </div>
      <ul className="flex-1 bg-white pt-px">
        <li>
          <div className="flex h-4 items-center gap-1">
            <Icon name="beam" />
            梁
          </div>
          <ul className="ml-[7px]">
            {["KL-1", "L-2"].map((name, i) => (
              <li key={name} className="flex h-4 items-center">
                <span className={`w-3 border-l border-dotted border-[#808080] ${i === 0 ? "h-4" : "-mt-2 h-2"}`}>
                  <span className={`block border-b border-dotted border-[#808080] ${i === 0 ? "h-2" : "h-full"}`} />
                </span>
                <svg viewBox="0 0 16 16" className="size-3 shrink-0" aria-hidden="true">
                  {art.gear}
                </svg>
                <span
                  className={`ml-1.5 flex h-4 items-center pr-1.5 pl-0.5 ${i === 0 ? "bg-[#316ac5]" : ""}`}
                >
                  {name}
                </span>
              </li>
            ))}
          </ul>
        </li>
      </ul>
    </aside>
  );
}

/* ---------- 3D scene ---------- */

const STEEL = "#9c8c84";
const stirrups = Array.from({ length: 27 }, (_, i) => {
  const x = 541 + i * 22.6;
  return { x, y: 297 - (x - 541) * 0.1165, dense: i % 2 === 0 };
});
const ties = [
  [539, 330], [581, 364], [624, 320], [664, 353], [709, 310], [749, 343], [794, 302], [834, 333],
  [878, 291], [918, 323], [964, 282], [1004, 314], [1050, 275], [1090, 302], [1132, 265],
];

function Scene() {
  return (
    <svg
      viewBox="142 133 1176 394"
      preserveAspectRatio="xMinYMin slice"
      className="block h-full w-full"
      fill="none"
      role="img"
      aria-label="钢筋三维"
    >
      <path d="M164 133h50v8h-50z" fill="#4b0096" />
      <path d="M214 133h101l120 161-12 116z" fill="#009a00" />
      <path d="M315 133h89l121 152-90 9z" fill="#00e600" />
      <path d="m871 133h36l-22 394h-35z" fill="#4d009b" />
      <path d="m907 133h94l-22 394h-94z" fill="#5b00b3" />
      <path d="M1001 133h88l58 78h-6l-10 112-130-172z" fill="#004b00" />
      <path d="M989 133h12v18z" fill="#2d4c5c" />
      <path d="M1089 133h90l51 68-83 10z" fill="#007300" />
      <g stroke="#f00" shapeRendering="crispEdges">
        <path d="m490 246 377-43M999 186l27-3M1201 163l117-14M588 135l68 91 196 257M1253 523l65-8" />
      </g>

      <path d="m422 410 34 28-4 89h-36z" fill="#29004c" />
      <path d="m456 438 95-4-4 93h-95z" fill="#2e005b" />
      <path d="m522 284 5-1 30 42-7 110-25-4z" fill="#3a0071" />
      <path d="m429 294 23 22 11 24-18 98-22-29z" fill="#2a5250" />
      <path d="m452 316 82-10-4 123-80 9-8-10z" fill="#2f5b5a" />
      <path d="m429 294 93-10 13 22-83 11z" fill="#387570" />
      <path d="m429 294 7 0 16 23 83-11-1 24-71 10z" fill="#3d5976" />
      <g stroke="#80479f" strokeWidth="2">
        <path d="m556 329-93 11-7 106 95-11M452 351l-4 85 100-13M438 310l-7 106M445 341l-5 86M507 370l50-7M505 408l47-6M529 311v100M537 306l-3 105M544 320l-3 95" />
      </g>

      <path d="m1141 211 33 43-15 273h-36z" fill="#29004c" />
      <path d="m1174 254 95-10-16 283h-94z" fill="#2e005b" />
      <path d="m1141 211 95-11 33 44-95 10z" fill="#3a0071" />
      <g stroke="#80479f" strokeWidth="2.500">
        <path d="m1143 227 92-11-5 106-92 12M1165 257l94-11-7 106-95 13M1242 250l-5 81-90 11M1250 258l-4 84-94 12M1164 291l45-4M1160 298l25-3" />
      </g>

      <g stroke={STEEL}>
        <path d="m541 297 602-70" strokeWidth="2.500" />
        <path d="M556 361 1164 291M556 368l604-70" strokeWidth="1.500" />
        <path d="m556 401 606-70" strokeWidth="3" />
        <path d="m552 412 604-71M552 424l604-71M556 434l606-70" strokeWidth="2" />
        {stirrups.map(({ x, y, dense }) => (
          <g key={x} strokeWidth="1.500">
            <path d={`M${x} ${y - 3}l-5 110l22 34M${x + 22} ${y + 32}l-5 109M${x - 2} ${y}l2-4 3 5`} />
            <path d={`M${x} ${y}l21 28`} strokeWidth="1.200" />
            <path d={`M${x + 17} ${y + 34}l-5 78M${x + 9} ${y + 36}l-5 72`} />
            {dense ? (
              <path d={`M${x + 1} ${y}l12 28M${x + 3} ${y}l15 28M${x + 1} ${y}l7 24M${x + 14} ${y + 34}l-5 80`} />
            ) : (
              <path d={`M${x + 16} ${y + 14}l-7 5M${x + 25} ${y + 34}l-5 84`} />
            )}
          </g>
        ))}
        <path d="m556 330 610-73" strokeWidth="4" />
      </g>
      <g stroke="#fff" strokeWidth="2">
        <path d="m527 286 615-73M556 326l615-73M549 448l614-72" />
        <path d="m551 406 590-69" strokeDasharray="9 3" />
      </g>
      <g stroke="#b183ef" strokeWidth="1.500">
        <path d="m527 286 29 40-7 122-21-27M1142 213l48-5 30 39-7 124-50 5M1171 253l49-6M1190 208l-7 123 30 40M1141 337l42-6M529 407l22-3" />
      </g>
      <g stroke="#0ff">
        {ties.map(([x, y]) => (
          <path key={x} d={`M${x - 2} ${y}l4 18M${x + 2} ${y + 2}l21 28v8l-5 7`} strokeDasharray="12 1" />
        ))}
      </g>
      <g fill="#00e000" fontSize="34" className="font-[Noto_Sans_Mono_CJK_SC,Noto_Sans_CJK_SC,sans-serif]">
        <text x="538" y="315">298</text>
        <text x="542" y="422">(350-2*20)+2*(75+1.9*d)</text>
      </g>
    </svg>
  );
}

/* ---------- floating panels ---------- */

function Rebar({ grade = 3 }: { grade?: 1 | 3 }) {
  return (
    <svg viewBox="0 0 12 12" className="inline-block size-3 align-[-2px]" role="img" aria-label="钢筋等级">
      <g fill="none" stroke="#000">
        {grade === 1 ? (
          <path d="M6 1v11M2 3.500h8v4H2z" strokeWidth="1.200" />
        ) : (
          <path d="M4.500 1.500v9M7.500 1.500v9M2 3.500h8v4H2zM2 9.500h8M6 9v3" />
        )}
      </g>
    </svg>
  );
}

type Prop = { no: number; name: string; value?: React.ReactNode; tone?: string; group?: boolean };

const properties: Prop[] = [
  { no: 1, name: "名称", value: "KL-1", tone: "bg-[#316ac5] text-white" },
  { no: 2, name: "类别", value: "楼层框架梁", tone: "text-[#0000ff]" },
  { no: 3, name: "截面宽度(mm)", value: "350" },
  { no: 4, name: "截面高度(mm)", value: "550" },
  { no: 5, name: "轴线距梁左边线距", value: "(175)" },
  { no: 6, name: "跨数量", value: "1" },
  { no: 7, name: "箍筋", value: <><Rebar />8@100/200(4)</>, tone: "text-[#0000ff]" },
  { no: 8, name: "肢数", value: "4", tone: "text-[#0000ff]" },
  { no: 9, name: "上部通长筋", value: <>2<Rebar />25</>, tone: "text-[#0000ff]" },
  { no: 10, name: "下部通长筋", value: <>4<Rebar />25</>, tone: "text-[#0000ff]" },
  { no: 11, name: "侧面构造或受扭筋", value: <>G4<Rebar />12</>, tone: "text-[#0000ff]" },
  { no: 12, name: "拉筋", value: <>(<Rebar grade={1} />6)</>, tone: "text-[#0000ff]" },
  { no: 13, name: "其它箍筋", tone: "text-[#0000ff]" },
  { no: 14, name: "备注" },
  { no: 15, name: "其它属性", tone: "text-[#808080]", group: true },
  { no: 23, name: "锚固搭接", tone: "text-[#808080]", group: true },
  { no: 38, name: "显示样式", tone: "text-[#808080]", group: true },
];

function ScrollButton({ down }: { down?: boolean }) {
  return (
    <button
      type="button"
      aria-label={down ? "向下滚动" : "向上滚动"}
      className="flex size-4 items-center justify-center rounded-sm border border-[#98b4ea] bg-[#c6d6fc]"
    >
      <svg viewBox="0 0 10 8" className="h-2 w-2.5">
        <path d={down ? "m1 2 4 4 4-4" : "m1 6 4-4 4 4"} fill="none" stroke="#4d6185" strokeWidth="2" />
      </svg>
    </button>
  );
}

function PropertyEditor() {
  return (
    <section className="absolute top-[166px] left-[61px] flex h-[369px] w-[332px] flex-col border border-[#4a50c0] bg-[#6f86d8] px-[3px] pb-[3px]">
      <header className="flex h-[22px] items-center justify-between bg-gradient-to-b from-[#6380dc] via-[#8099e4] to-[#7a92e0] pr-1">
        <h2 className="text-[13px] font-bold text-[#d5e0fa]">属性编辑器</h2>
        <button
          type="button"
          aria-label="关闭"
          className="flex size-[13px] items-center justify-center border border-white bg-[#b9536a]"
        >
          <svg viewBox="0 0 8 8" className="size-2">
            <path d="m1 1 6 6M7 1 1 7" stroke="#fff" strokeWidth="1.800" />
          </svg>
        </button>
      </header>
      <div className="flex min-h-0 flex-1 overflow-hidden border border-[#7f9db9] bg-white">
        <table className="w-[303px] shrink-0 table-fixed border-separate border-spacing-0 self-start pl-px">
          <colgroup>
            <col className="w-[21px]" />
            <col className="w-[121px]" />
            <col />
          </colgroup>
          <thead>
            <tr className="h-[23px] [&>th]:border-r [&>th]:border-b [&>th]:border-[#c0c0c0] [&>th]:font-normal">
              <th className="bg-gradient-to-b from-white to-[#ece9d8]" />
              <th className="bg-gradient-to-b from-[#fad9a0] to-[#f2bd60] text-[#5a0052]">属性名称</th>
              <th className="bg-gradient-to-b from-white to-[#ece9d8]">属性值</th>
            </tr>
          </thead>
          <tbody>
            {properties.map((p) => (
              <tr key={p.no} className="h-[19px] [&>*]:border-r [&>*]:border-b [&>*]:border-[#c0c0c0]">
                <th
                  scope="row"
                  className={`p-0 text-center font-normal ${
                    p.no === 1 ? "bg-[#fdd08a] text-[#5a0052]" : "bg-gradient-to-r from-white to-[#ece9d8]"
                  }`}
                >
                  {p.no}
                </th>
                <td className={`p-0 ${p.tone ?? ""}`}>
                  <div className="flex items-center">
                    <span className="flex w-5 justify-center">
                      {p.group && (
                        <button
                          type="button"
                          aria-label={`展开${p.name}`}
                          className="flex size-[13px] items-center justify-center border border-[#b0b0a8] bg-[#f0efe8]"
                        >
                          <svg viewBox="0 0 7 7" className="size-[7px]">
                            <path d="M0 3.500h7M3.500 0v7" stroke="#000" />
                          </svg>
                        </button>
                      )}
                    </span>
                    {p.name}
                  </div>
                </td>
                <td className="p-0 pb-0.5 pl-0.5 text-[#808080]">{p.value}</td>
              </tr>
            ))}
          </tbody>
        </table>
        <div className="flex flex-1 flex-col items-center bg-[#f7f6f1] py-0.5">
          <ScrollButton />
          <div className="mt-px flex h-[258px] w-3.5 items-center justify-center rounded-sm border border-[#a8bff0] bg-[#c6d6fc]">
            <span className="flex w-1.5 flex-col gap-px">
              {[0, 1, 2, 3].map((i) => (
                <span key={i} className="h-px bg-[#8fa9e6]" />
              ))}
            </span>
          </div>
          <span className="flex-1" />
          <ScrollButton down />
        </div>
      </div>
    </section>
  );
}

function DisplayPanel() {
  return (
    <section className="absolute top-[135px] left-[143px] h-12 w-[175px] border border-[#4a50c0] bg-[#7088dc] px-1">
      <h2 className="flex h-[22px] items-center bg-gradient-to-b from-[#6380dc] to-[#8099e4] text-[13px] font-bold text-[#d5e0fa]">
        钢筋显示控制面板
      </h2>
      <label className="flex h-6 items-center gap-1 border border-[#7f9db9] bg-white px-1 pb-2">
        <input type="checkbox" defaultChecked className="size-[11px] accent-[#21a121]" />
        上部通长筋
      </label>
    </section>
  );
}

/* ---------- snap bar ---------- */

function SnapBar() {
  return (
    <div className="flex h-8 items-center gap-1 pb-1">
      <Bar className="h-7 pr-0.5">
        <Grip />
        <Tool icon="ortho" label="正交" />
        <Tool icon="snap" label="对象捕捉" pressed />
        <Tool icon="dynInput" label="动态输入" />
      </Bar>
      <Bar className="h-7 pr-0.5">
        <Grip />
        <Tool icon="cross" label="交点" />
        <Tool icon="perpendicular" label="垂点" pressed />
        <Tool icon="middle" label="中点" pressed />
        <Tool icon="vertex" label="顶点" />
        <Tool icon="coords" label="坐标" />
      </Bar>
      <Bar className="h-7 pr-3 text-[#aca899]">
        <Grip />
        <span className="text-black">
          <Combo label="偏移方式" value="不偏移" className="w-[58px]" />
        </span>
        <Sep />
        <span>X=</span>
        <Spin label="X" value="0" className="mx-px w-[58px]" />
        <span className="pr-2">mm</span>
        <span>Y=</span>
        <Spin label="Y" value="0" className="mx-px w-[58px]" />
        <span>mm</span>
        <Sep />
        <label className="flex items-center gap-2 px-0.5 text-black">
          <input type="checkbox" className="size-[11px] appearance-none border border-[#aca899]" />
          旋转
        </label>
        <Spin label="旋转角度" value="0.000" className="ml-0.5 w-[69px]" />
        <span>°</span>
      </Bar>
    </div>
  );
}

/* ---------- rebar table ---------- */

function Shape({ kind, label }: { kind: "u" | "line" | "hoop" | "tie"; label: string }) {
  return (
    <svg viewBox="0 0 200 30" className="block h-[30px] w-[200px]" fill="none" fontSize="12">
      {kind === "u" && (
        <>
          <path d="M40 7v14h119V7" stroke="#000" strokeWidth="2" />
          <text x="18" y="18" fill="#000">375</text>
          <text x="161" y="18" fill="#000">375</text>
          <text x="87" y="18" fill="#f00">{label}</text>
        </>
      )}
      {kind === "line" && (
        <>
          <path d="M23 20h150" stroke="#000" strokeWidth="2" />
          <text x="89" y="17" fill="#f00">{label}</text>
        </>
      )}
      {kind === "hoop" && (
        <>
          <rect x="82" y="5" width="33" height="21" rx="1" stroke="#000" strokeWidth="2" />
          <path d="m102 12 9-7M108 17l7-7" stroke="#000" strokeWidth="2" />
          <text x="54" y="20" fill="#000">510</text>
          <text x="83" y="23" fill="#f00">{label}</text>
        </>
      )}
      {kind === "tie" && (
        <>
          <path d="m50 25-12-12V7h129v6l-12 12" stroke="#000" strokeWidth="2" />
          <text x="89" y="20" fill="#000">{label}</text>
        </>
      )}
    </svg>
  );
}

type Row = {
  h: string;
  name: string;
  dia: string;
  code: string;
  kind: "u" | "line" | "hoop" | "tie";
  label: string;
  formula: string;
  note: string;
  rest: string[];
};

const rows: Row[] = [
  { h: "h-[34px]", name: "1跨.上通长\n筋1", dia: "25", code: "64", kind: "u", label: "3360", formula: "400-20+15*d+2600+400-20+15\n*d", note: "支座宽-保护层+弯折+净长+\n支座宽-保护层+弯折", rest: ["4110", "2", "0", "0", "15.824", "31.647", "直筋", "套管挤压"] },
  { h: "h-[29px]", name: "1跨.侧面构\n造筋1", dia: "12", code: "1", kind: "line", label: "2960", formula: "15*d+2600+15*d", note: "锚固+净长+锚固", rest: ["2960", "4", "0", "0", "2.628", "10.514", "直筋", "绑扎"] },
  { h: "h-[34px]", name: "1跨.下部钢\n筋1", dia: "25", code: "64", kind: "u", label: "3360", formula: "400-20+15*d+2600+400-20+15\n*d", note: "支座宽-保护层+弯折+净长+\n支座宽-保护层+弯折", rest: ["4110", "4", "0", "0", "15.824", "63.294", "直筋", "套管挤压"] },
  { h: "h-[34px]", name: "1跨.箍筋1", dia: "8", code: "195", kind: "hoop", label: "310", formula: "2*((350-2*20)+(550-2*20))+\n2*(11.9*d)", note: "", rest: ["1830", "25", "0", "0", "0.723", "18.071", "箍筋", "绑扎"] },
  { h: "h-[41px]", name: "1跨.箍筋2", dia: "8", code: "195", kind: "hoop", label: "131", formula: "2*(((350-2*20-2*d-25)/3*1+\n25+2*d)+(550-2*20))+2*(11.\n9*d)", note: "", rest: ["1472", "25", "0", "0", "0.581", "14.536", "箍筋", "绑扎"] },
  { h: "h-[29px]", name: "1跨.拉筋1", dia: "6", code: "485", kind: "tie", label: "310", formula: "(350-2*20)+2*(75+1.9*d)", note: "", rest: ["483", "16", "0", "0", "0.107", "1.716", "箍筋", "绑扎"] },
];

const heads = ["", "筋号", "直径(mm)", "级别", "图号", "图形", "计算公式", "公式描述", "长度(mm)", "根数", "搭接", "损耗(%)", "单重(kg)", "总重(kg)", "钢筋归类", "搭接形式"];

const colWidths = ["w-[34px]", "w-[73px]", "w-[56px]", "w-[36px]", "w-[33px]", "w-[201px]", "w-[166px]", "w-[156px]", "w-[61px]", "w-[38px]", "w-[39px]", "w-[49px]", "w-[61px]", "w-[61px]", "w-[71px]", "w-[74px]"];

function RebarTable() {
  return (
    <table className="w-[1209px] table-fixed border-separate border-spacing-0 [&_td]:border-r [&_td]:border-b [&_td]:border-[#c0c0c0] [&_td]:p-0 [&_td]:pb-0.5 [&_td]:pl-0.5 [&_th]:border-r [&_th]:border-b [&_th]:border-[#c0c0c0] [&_th]:p-0 [&_th]:font-normal">
      <colgroup>
        {colWidths.map((w, i) => (
          <col key={i} className={w} />
        ))}
      </colgroup>
      <thead>
        <tr className="h-5">
          {heads.map((h, i) => (
            <th
              key={i}
              scope="col"
              className={
                i === 5
                  ? "bg-gradient-to-b from-[#fad9a0] to-[#f2bd60] text-[#5a0052]"
                  : "bg-gradient-to-b from-white to-[#ece9d8]"
              }
            >
              {h}
            </th>
          ))}
        </tr>
      </thead>
      <tbody>
        {rows.map((r, i) => {
          const current = i === 5;
          return (
            <tr key={i} className={`${r.h} bg-[#ccffd9]`}>
              <th
                scope="row"
                className={`pb-0.5! ${current ? "bg-[#fdd08a] text-[#5a0052]" : "bg-gradient-to-r from-white to-[#ece9d8]"}`}
              >
                <span className="pr-1.5">{current ? "6*" : i + 1}</span>
              </th>
              <td className="border-r-black! whitespace-pre">{r.name}</td>
              <td>{r.dia}</td>
              <td className="text-center">
                <Rebar grade={current ? 1 : 3} />
              </td>
              <td>{r.code}</td>
              <td
                className={`p-0! ${current ? "bg-[#b5e6d8] outline-1 -outline-offset-1 outline-dotted outline-black" : ""}`}
              >
                <div className="flex h-7 items-center">
                  <Shape kind={r.kind} label={r.label} />
                </div>
              </td>
              <td className="whitespace-pre">{r.formula}</td>
              <td className="whitespace-pre">{r.note}</td>
              {r.rest.map((v, j) => (
                <td key={j}>{v}</td>
              ))}
            </tr>
          );
        })}
        <tr className="h-[19px]">
          <th scope="row" className="bg-gradient-to-r from-white to-[#ece9d8]">
            <span className="pr-1.5">7</span>
          </th>
          {heads.slice(1).map((h) => (
            <td key={h} className={h === "筋号" ? "border-r-black!" : ""} />
          ))}
        </tr>
      </tbody>
    </table>
  );
}

const navArrows = [
  { label: "首行", d: "M2 2h2.500v12H2zM13 2v12L5 8z" },
  { label: "上一行", d: "M11 2v12L4 8z" },
  { label: "下一行", d: "M5 2v12l7-6z" },
  { label: "末行", d: "M11.500 2H14v12h-2.500zM3 2v12l8-6z" },
];
const moveArrows = [
  { label: "上移", d: "m8 2 5 6h-3v5H6V8H3z" },
  { label: "下移", d: "m8 14 5-6h-3V3H6v5H3z", ghost: true },
];

function NavButton({ label, d, ghost }: { label: string; d: string; ghost?: boolean }) {
  return (
    <button type="button" aria-label={label} disabled={ghost} className="flex flex-1 justify-center">
      <svg viewBox="0 0 16 16" className="size-4">
        <path d={d} fill={ghost ? "#c6c3b5" : "#2a6fe0"} />
      </svg>
    </button>
  );
}

function RebarPane() {
  return (
    <section className="flex min-h-0 flex-1">
      <div className="flex w-3 shrink-0 flex-col items-center gap-1">
        <button
          type="button"
          aria-label="关闭面板"
          className="flex size-2.5 items-center justify-center rounded-sm bg-[#d8432c]"
        >
          <svg viewBox="0 0 6 6" className="size-1.5">
            <path d="m1 1 4 4M5 1 1 5" stroke="#fff" strokeWidth="1.300" />
          </svg>
        </button>
        <span className="flex-1 border-l-2 border-dotted border-[#aaa797]" />
      </div>
      <div className="flex min-w-0 flex-1 flex-col">
        <Bar className="h-6">
          <span className="flex w-24">
            {navArrows.map((n) => (
              <NavButton key={n.label} {...n} />
            ))}
          </span>
          <Sep />
          <span className="flex w-[43px]">
            {moveArrows.map((n) => (
              <NavButton key={n.label} {...n} />
            ))}
          </span>
          <Sep />
          <Tool icon="insert" label="插入" />
          <Tool icon="remove" label="删除" />
          <Tool icon="ghostScale" label="缩尺配筋" disabled />
          <Tool icon="info" label="钢筋信息" />
          <Tool icon="library" label="钢筋图库" />
          <Tool icon="other" label="其他" menu="tight" />
          <Tool label="关闭" />
          <Sep />
          <span className="pb-0.5 pl-2">单构件钢筋总重(kg)：139.778</span>
        </Bar>
        <div className="min-h-0 flex-1 overflow-hidden border-t border-l border-[#7f9db9] bg-white">
          <RebarTable />
        </div>
      </div>
    </section>
  );
}

/* ---------- red pen marks over the window ---------- */

function PenMarks() {
  return (
    <svg
      viewBox="0 0 1318 943"
      className="pointer-events-none absolute top-0 left-0 h-[943px] w-[1318px]"
      fill="none"
      aria-hidden="true"
    >
      <g stroke="#f04848">
        <ellipse cx="503" cy="37.500" rx="42" ry="15.500" />
        <ellipse cx="592" cy="97.500" rx="34.500" ry="21.500" />
        <ellipse cx="471.500" cy="789.500" rx="76.500" ry="17.500" />
        <path d="M583 133 551 308" strokeOpacity=".5" />
      </g>
      <g fill="#ff3838">
        <path d="m498 55 48 245-5 1 10 14 3-18-4 1z" />
        <path d="m581 306 4-174-5 1 8-15 6 14-4 1-7 173z" />
        <path d="m550 308-79 444-4-1 4 16 10-14-5-1z" />
        <path d="m496 773 269-394-4-3 12-8-2 15-3-3-270 394z" />
      </g>
    </svg>
  );
}

export default function App() {
  return (
    <div className="relative flex h-screen min-h-[943px] w-full flex-col overflow-hidden bg-[#ece9d8] font-[Noto_Sans_Mono_CJK_SC,Noto_Sans_CJK_SC,sans-serif] text-xs/3 whitespace-nowrap text-black">
      <MenuBar />
      <MainBar />
      <div className="flex min-h-0 flex-1">
        <ComponentList />
        <main className="flex min-w-0 flex-1 flex-col pl-[3px]">
          <EditBars />
          <div className="h-[394px] shrink-0 overflow-hidden bg-black">
            <Scene />
          </div>
          <SnapBar />
          <RebarPane />
        </main>
      </div>
      <DisplayPanel />
      <PropertyEditor />
      <PenMarks />
    </div>
  );
}
